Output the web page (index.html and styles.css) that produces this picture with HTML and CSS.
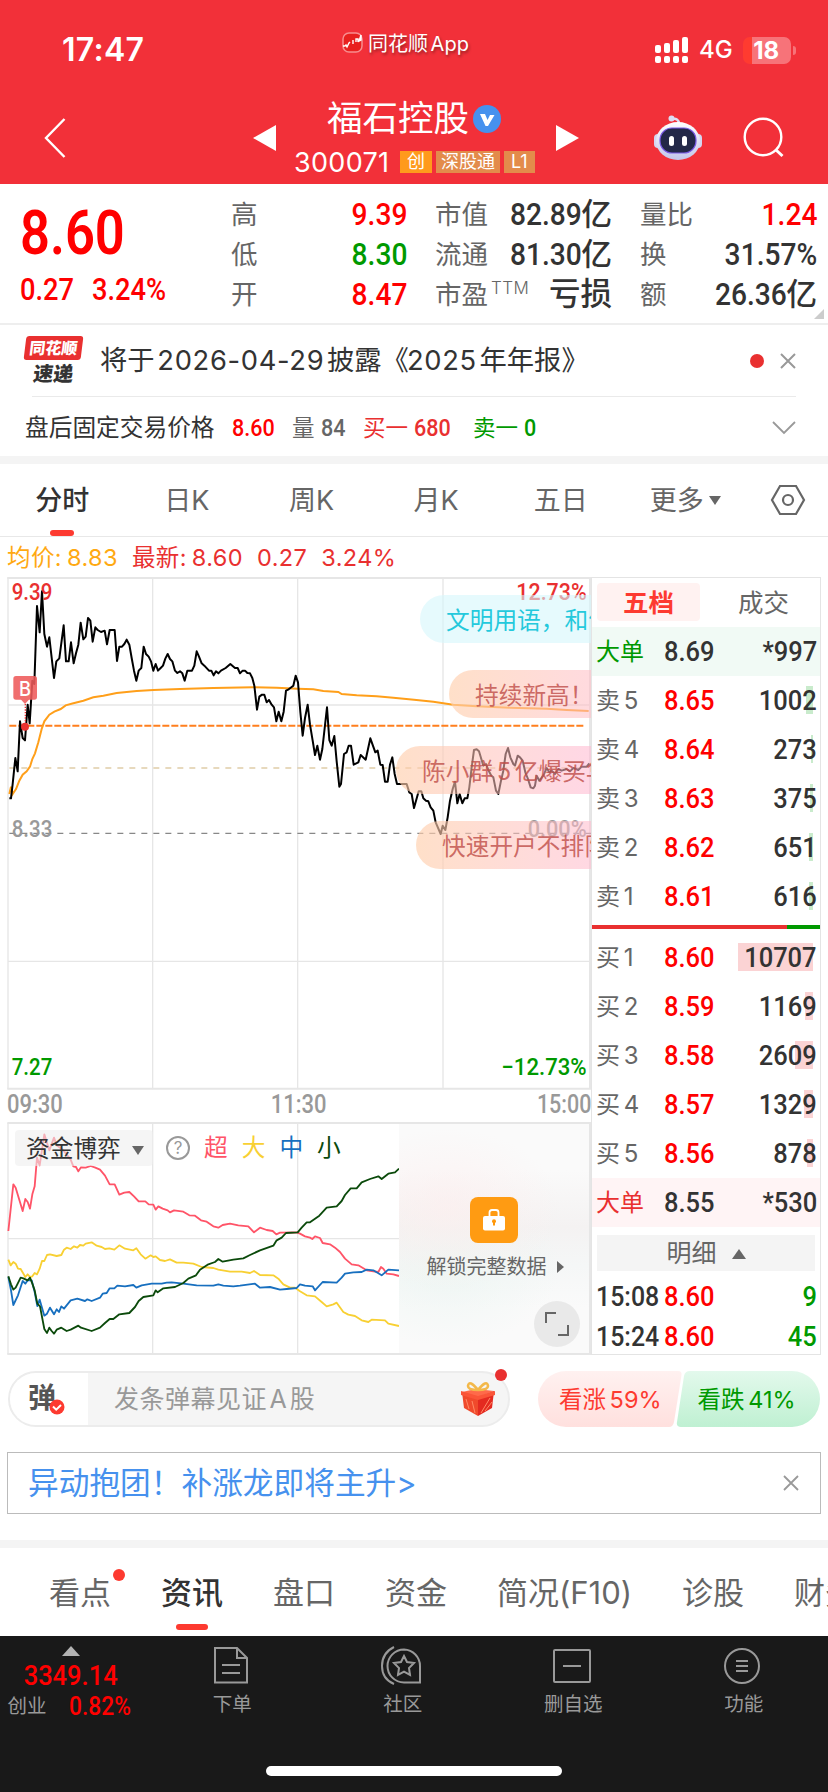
FILE: index.html
```html
<!DOCTYPE html>
<html lang="zh-CN">
<head>
    <meta charset="UTF-8">
    <meta name="viewport" content="width=device-width, initial-scale=1.0">
    <title>福石控股 300071</title>
    <link rel="stylesheet" href="styles.css">
</head>
<body>

    <header class="header">
        <div class="status-bar">
            <span class="time">17:47</span>
            <div class="app-name">
                <svg width="21" height="21" viewBox="0 0 21 21"><rect x="1" y="1" width="19" height="19" rx="6" fill="#e8201f" stroke="#f78d8f" stroke-width="1.5"/><path d="M1 14h2l1-1 1 2 2-4 1-1M11 8v4M14 10V7h2v3M19 3l-2 6 2-1V3" fill="none" stroke="#fff" stroke-width="1.4"/></svg>
                <span>同花顺 App</span>
            </div>
            <div class="signal">
                <svg width="34" height="27" viewBox="0 0 34 27" fill="#fff"><rect x="0" y="8" width="6" height="8" rx="2"/><rect x="9" y="6" width="6" height="10" rx="2"/><rect x="18" y="3" width="6" height="13" rx="2"/><rect x="27" y="0" width="6" height="16" rx="2"/><rect x="0" y="19" width="6" height="7" rx="2"/><rect x="9" y="19" width="6" height="7" rx="2"/><rect x="18" y="19" width="6" height="7" rx="2"/><rect x="27" y="19" width="6" height="7" rx="2"/></svg>
                <span class="net">4G</span>
                <span class="battery">18</span>
                <i class="battery-tip"></i>
            </div>
        </div>

        <div class="nav-bar">
            <svg class="back" width="24" height="42" viewBox="0 0 24 42"><path d="M21.500 2L3 21l18.500 19" fill="none" stroke="#fff" stroke-width="2.400"/></svg>
            <svg width="23" height="26" viewBox="0 0 23 26"><path d="M0 13L23 0v26z" fill="#fff"/></svg>
            <div class="stock">
                <div class="stock-name">福石控股
                    <svg width="28" height="28" viewBox="0 0 28 28"><circle cx="14" cy="14" r="14" fill="#4691ee"/><path d="M7 9h5l2.500 6L17 10h4.500L15 21h-2.500z" fill="#fff"/></svg>
                </div>
                <div class="stock-code"><span class="code">300071</span><span class="tag tag-main">创</span><span class="tag">深股通</span><span class="tag">L1</span></div>
            </div>
            <svg width="23" height="26" viewBox="0 0 23 26"><path d="M23 13L0 0v26z" fill="#fff"/></svg>
            <svg class="robot" width="48" height="46" viewBox="0 0 48 46">
                <defs>
                    <linearGradient id="shell" x1="0" y1="0" x2="0" y2="1"><stop offset="0" stop-color="#fff"/><stop offset="1" stop-color="#c3c5ea"/></linearGradient>
                </defs>
                <path d="M18 4q7-1 7 5" fill="none" stroke="#dfe0f5" stroke-width="2.500"/><circle cx="17.500" cy="3.500" r="3" fill="#dcdcf2"/>
                <rect x="0" y="19" width="8" height="14" rx="4" fill="#d5d6f0"/><rect x="40" y="19" width="8" height="14" rx="4" fill="#d5d6f0"/>
                <ellipse cx="24" cy="26" rx="22" ry="19" fill="url(#shell)"/>
                <rect x="6" y="13" width="36" height="25" rx="12" fill="#232848" stroke="#7a5ae6" stroke-width="1.200"/>
                <rect x="15" y="21" width="5" height="10" rx="2.500" fill="#fff"/><rect x="28" y="21" width="5" height="10" rx="2.500" fill="#fff"/>
            </svg>
            <svg class="search" width="42" height="42" viewBox="0 0 42 42"><circle cx="20" cy="20" r="18.300" fill="none" stroke="#fff" stroke-width="2.400"/><path d="M32.500 32.500l7 6.500" stroke="#fff" stroke-width="3"/></svg>
        </div>
    </header>

    <section class="quote">
        <div class="price-box">
            <div class="price"><span class="num">8.60</span></div>
            <div class="change"><span class="num">0.27</span><span class="num">3.24%</span></div>
        </div>
        <div class="quote-col">
            <div><label>高</label><b class="num red">9.39</b></div>
            <div><label>低</label><b class="num green">8.30</b></div>
            <div><label>开</label><b class="num red">8.47</b></div>
        </div>
        <div class="quote-col">
            <div><label>市值</label><b class="num">82.89<em>亿</em></b></div>
            <div><label>流通</label><b class="num">81.30<em>亿</em></b></div>
            <div><label>市盈<sup>TTM</sup></label><b class="cjk">亏损</b></div>
        </div>
        <div class="quote-col">
            <div><label>量比</label><b class="num red">1.24</b></div>
            <div><label>换</label><b class="num">31.57%</b></div>
            <div><label>额</label><b class="num">26.36<em>亿</em></b></div>
        </div>
        <i class="corner"></i>
    </section>

    <section class="notice">
        <div class="express"><span class="express-top">同花顺</span><span class="express-bottom">速递</span></div>
        <p>将于 <span>2026-04-29</span> 披露《<span>2025</span> 年年报》</p>
        <i class="dot"></i>
        <svg width="18" height="18" viewBox="0 0 18 18"><path d="M2 2l14 14M16 2L2 16" stroke="#999" stroke-width="2"/></svg>
    </section>

    <section class="after-hours">
        <span class="label">盘后固定交易价格</span>
        <span class="num red">8.60</span>
        <span class="gray">量 <span class="num">84</span></span>
        <span class="buy">买一 <span class="num">680</span></span>
        <span class="green">卖一 <span class="num">0</span></span>
        <svg width="24" height="14" viewBox="0 0 24 14"><path d="M1 1l11 11L23 1" fill="none" stroke="#999" stroke-width="1.800"/></svg>
    </section>

    <nav class="chart-tabs">
        <span class="active">分时</span>
        <span>日K</span>
        <span>周K</span>
        <span>月K</span>
        <span>五日</span>
        <span>更多<i class="caret"></i></span>
        <span><svg width="36" height="32" viewBox="0 0 36 32" fill="none" stroke="#666" stroke-width="2.200"><path d="M10 2h16l8 14-8 14H10L2 16z"/><circle cx="18" cy="16" r="5"/></svg></span>
    </nav>

    <div class="legend">
        <span class="avg">均价: 8.83</span>
        <span>最新: 8.60</span>
        <span>0.27</span>
        <span>3.24%</span>
    </div>

    <main class="board">
        <div class="charts">
            <div class="minute-chart">
                <svg width="584" height="513" viewBox="21 339 1752 1539" fill="none">
                    <g stroke="#e6e6e6" stroke-width="4">
                        <path d="M24 340V1876M458 340V1876M893 340V1876M1329 340V1876M24 723H1770M24 1492H1770"/>
                        <path d="M22 342H1773M22 1874H1773M1770 340V1876" stroke-width="6"/>
                    </g>
                    <path d="M28 912H1755" stroke="#e0cda8" stroke-width="5" stroke-dasharray="18 18"/>
                    <path d="M28 1108H1773" stroke="#888" stroke-width="4" stroke-dasharray="18 18"/>
                    <path d="M28 785H1755" stroke="#ff7f1e" stroke-width="6" stroke-dasharray="21 6"/>
                    <polyline stroke="#ff9f1a" stroke-width="6" points="28,990 33,968 38,990 48,975 58,950 68,932 80,922 90,908 97,885 105,868 115,835 125,795 133,772 148,752 163,743 182,735 197,724 220,718 250,710 280,700 310,695 350,687 410,681 460,678 540,675 640,672 760,670 830,671 893,674 940,676 970,681 1015,684 1025,690 1070,694 1130,697 1180,701 1242,707 1300,713 1360,722 1430,727 1530,731 1640,734 1700,738 1766,741"/>
                    <polyline stroke="#000" stroke-width="6" stroke-linejoin="round" points="28,1003 33,1003 38,960 46,882 53,922 60,772 68,822 75,829 83,722 89,778 97,650 103,660 111,426 119,505 126,382 133,510 141,548 148,520 162,642 169,592 178,583 191,484 198,592 206,592 213,535 221,598 228,568 235,542 242,476 250,526 257,518 264,462 271,470 278,533 286,490 293,498 303,504 314,500 321,541 329,498 344,498 351,591 358,548 366,548 373,540 380,527 388,542 395,582 402,620 409,650 416,620 424,612 431,548 438,570 446,578 453,592 460,620 467,600 474,620 482,612 489,605 496,584 503,570 510,585 517,592 525,620 532,627 540,622 547,628 554,650 562,620 576,620 583,605 590,562 597,578 605,598 613,605 627,620 634,620 641,634 648,622 655,628 663,620 677,612 691,600 705,612 713,612 720,628 728,620 735,620 742,627 750,628 757,642 763,665 771,737 778,698 786,692 793,692 800,715 807,708 815,722 822,730 829,772 836,743 844,772 851,743 858,680 866,676 880,665 887,635 894,655 901,744 908,815 915,762 923,722 930,782 938,830 945,873 952,845 960,887 967,855 981,730 988,828 995,845 1003,816 1010,892 1018,968 1023,960 1032,870 1040,865 1046,845 1053,845 1061,902 1075,895 1082,873 1097,887 1111,823 1126,865 1133,860 1141,902 1148,903 1155,953 1163,953 1170,902 1177,880 1184,930 1191,960 1220,960 1228,985 1235,990 1242,1032 1256,982 1264,982 1270,1003 1278,1010 1285,1012 1292,1030 1300,1040 1307,1075 1322,1110 1328,1085 1336,1098 1343,1060 1350,1010 1358,975 1365,953 1372,1018 1379,990 1387,1018 1394,1003 1402,1003 1408,970 1415,910 1422,858 1430,856 1437,862 1450,905 1458,900 1466,920 1474,935 1480,940 1488,980 1495,990 1502,955 1510,920 1517,870 1524,852 1531,880 1540,900 1545,905 1553,875 1560,880 1568,890 1576,925 1584,945 1592,970 1600,973 1605,965 1610,935 1618,950 1630,935 1640,912 1648,925 1655,920 1665,930 1675,915 1685,920 1700,915 1710,922 1720,912 1735,918 1745,908 1760,908 1768,898"/>
                    <path d="M76 712V780" stroke="#e93030" stroke-width="4" stroke-dasharray="4 4"/>
                    <circle cx="75" cy="788" r="12" fill="#e93030"/>
                    <path d="M62 706h26l-13 14z" fill="#f07070"/>
                    <rect x="40" y="636" width="71" height="71" rx="8" fill="#ee5a5a" opacity=".88"/>
                    <text class="marker" x="57" y="696" textLength="36" lengthAdjust="spacingAndGlyphs">B</text>
                    <g class="axis">
                        <text x="35" y="407" fill="#e93030" textLength="122" lengthAdjust="spacingAndGlyphs">9.39</text>
                        <text x="1549" y="407" fill="#e93030" textLength="211" lengthAdjust="spacingAndGlyphs">12.73%</text>
                        <text x="35" y="1118" fill="#999" textLength="122" lengthAdjust="spacingAndGlyphs">8.33</text>
                        <text x="1583" y="1118" fill="#999" textLength="177" lengthAdjust="spacingAndGlyphs">0.00%</text>
                        <text x="35" y="1832" fill="#009900" textLength="122" lengthAdjust="spacingAndGlyphs">7.27</text>
                        <text x="1504" y="1832" fill="#009900" textLength="256" lengthAdjust="spacingAndGlyphs">−12.73%</text>
                    </g>
                </svg>
                <div class="bullet bullet-1">文明用语，和气</div>
                <div class="bullet bullet-2">持续新高！</div>
                <div class="bullet bullet-3">陈小群 5 亿爆买华</div>
                <div class="bullet bullet-4">快速开户不排队</div>
            </div>

            <div class="hours"><span class="num">09:30</span><span class="num">11:30</span><span class="num">15:00</span></div>

            <div class="fund-chart">
                <svg width="584" height="233" viewBox="21 215 1752 699" fill="none">
                    <g stroke="#e6e6e6" stroke-width="4">
                        <path d="M24 218V912M458 218V912M893 218V912M24 565H1197"/>
                        <path d="M22 218H1773M22 911H1773M1770 218V912" stroke-width="6"/>
                    </g>
                    <g stroke-width="5.500" stroke-linejoin="round">
                        <polyline stroke="#ff5468" points="25,542 40,402 47,412 68,482 76,446 83,455 90,475 97,432 104,408 111,322 119,345 133,252 148,300 162,262 170,285 190,300 212,328 220,348 228,350 235,363 243,351 257,352 272,347 286,352 300,358 315,376 329,402 344,402 358,433 373,427 388,425 402,438 416,453 436,453 446,462 460,463 467,478 475,468 488,475 503,480 510,486 522,480 550,484 568,495 585,496 603,510 620,514 640,528 655,532 668,524 690,520 715,525 745,528 762,546 780,532 800,539 818,542 829,552 840,547 890,546 900,550 915,558 930,562 937,566 945,558 960,563 968,578 990,582 1005,592 1020,605 1035,625 1055,642 1075,645 1100,660 1135,665 1143,650 1150,655 1160,670 1180,672 1197,677"/>
                        <polyline stroke="#f8d033" points="25,628 32,645 40,635 47,640 54,655 62,656 76,680 83,672 90,680 97,678 104,668 111,672 119,655 126,632 133,632 141,614 150,612 170,617 184,614 192,598 200,592 212,596 222,588 232,592 240,584 250,586 257,580 275,576 290,586 305,590 315,596 328,594 343,598 358,585 375,595 400,600 409,594 422,612 436,625 452,615 460,620 467,618 480,629 495,632 510,627 530,637 550,637 580,640 605,650 640,653 655,658 690,664 725,664 750,668 762,662 780,674 820,675 835,685 850,702 870,712 885,712 900,723 920,735 945,738 965,755 980,768 1000,762 1010,757 1030,785 1045,793 1065,797 1085,810 1105,815 1115,808 1155,810 1165,820 1197,827"/>
                        <polyline stroke="#176fbf" points="25,680 33,720 40,764 54,735 68,692 76,700 83,690 95,690 104,725 112,767 119,748 133,796 141,790 150,772 162,792 170,777 177,785 184,768 192,775 212,750 232,745 255,752 262,747 275,752 300,742 308,730 320,728 329,714 343,714 352,706 375,708 400,704 409,712 425,705 455,700 485,700 500,697 515,696 550,700 590,705 640,706 655,702 670,706 700,708 720,706 765,700 780,712 810,710 840,718 860,716 890,713 900,702 915,706 938,708 945,720 968,695 1010,697 1025,682 1035,670 1060,666 1085,665 1100,658 1120,660 1145,675 1165,658 1197,660"/>
                        <polyline stroke="#0b4a0b" points="25,678 33,702 40,718 47,712 62,682 70,684 83,690 90,682 97,700 104,720 112,760 120,768 133,836 141,848 148,832 155,842 162,850 170,838 184,832 200,842 212,838 235,826 243,832 275,842 300,832 315,818 329,806 340,806 358,792 388,788 405,770 416,752 430,740 460,735 467,720 473,726 490,714 525,710 550,698 565,685 588,675 600,658 625,642 645,635 655,626 668,634 700,628 730,624 750,614 780,600 820,586 830,570 845,562 858,548 893,546 905,532 920,516 930,516 958,496 980,472 1010,468 1025,452 1035,434 1052,414 1070,414 1085,396 1110,386 1135,378 1145,386 1165,370 1185,366 1197,355"/>
                    </g>
                </svg>
                <div class="fund-head">
                    <span class="fund-select">资金博弈<i class="caret"></i></span>
                    <span class="help">?</span>
                    <span class="super">超</span><span class="large">大</span><span class="middle">中</span><span class="small">小</span>
                </div>
                <div class="unlock">
                    <span class="lock"><svg width="22" height="22" viewBox="0 0 22 22"><path d="M6.500 8V3.500Q6.500 1 9 1h4q2.500 0 2.500 2.500V8" fill="none" stroke="#fff" stroke-width="1.800"/><rect y="7" width="22" height="14.500" rx="2" fill="#fff"/><path d="M11 12v4.500" stroke="#ff980a" stroke-width="2"/><circle cx="11" cy="12.300" r="2" fill="#ff980a"/></svg></span>
                    <span class="unlock-text">解锁完整数据<i></i></span>
                    <span class="expand"><svg width="24" height="24" viewBox="0 0 24 24" fill="none" stroke="#666" stroke-width="2"><path d="M1 11V1h10M23 13v10H13"/></svg></span>
                </div>
            </div>
        </div>

        <aside class="order-book">
            <div class="book-tabs"><span class="active">五档</span><span>成交</span></div>
            <div class="row big-sell"><span class="green">大单</span><b class="num">8.69</b><b class="num vol">*997</b></div>
            <div class="row sell"><span>卖 5</span><b class="num red">8.65</b><i style="width: 7px"></i><b class="num vol">1002</b></div>
            <div class="row sell"><span>卖 4</span><b class="num red">8.64</b><i style="width: 2px"></i><b class="num vol">273</b></div>
            <div class="row sell"><span>卖 3</span><b class="num red">8.63</b><i style="width: 3px"></i><b class="num vol">375</b></div>
            <div class="row sell"><span>卖 2</span><b class="num red">8.62</b><i style="width: 4px"></i><b class="num vol">651</b></div>
            <div class="row sell"><span>卖 1</span><b class="num red">8.61</b><i style="width: 4px"></i><b class="num vol">616</b></div>
            <div class="ratio"><i></i></div>
            <div class="row"><span>买 1</span><b class="num red">8.60</b><i style="width: 75px"></i><b class="num vol">10707</b></div>
            <div class="row"><span>买 2</span><b class="num red">8.59</b><i style="width: 8px"></i><b class="num vol">1169</b></div>
            <div class="row"><span>买 3</span><b class="num red">8.58</b><i style="width: 18px"></i><b class="num vol">2609</b></div>
            <div class="row"><span>买 4</span><b class="num red">8.57</b><i style="width: 9px"></i><b class="num vol">1329</b></div>
            <div class="row"><span>买 5</span><b class="num red">8.56</b><i style="width: 6px"></i><b class="num vol">878</b></div>
            <div class="row big-buy"><span class="buy">大单</span><b class="num">8.55</b><b class="num vol">*530</b></div>
            <div class="detail">明细<i></i></div>
            <div class="row trade"><b class="num">15:08</b><b class="num red">8.60</b><b class="num vol green">9</b></div>
            <div class="row trade"><b class="num">15:24</b><b class="num red">8.60</b><b class="num vol green">45</b></div>
        </aside>
    </main>

    <section class="danmu">
        <div class="danmu-input">
            <span class="danmu-switch">弹<svg width="16" height="16" viewBox="0 0 16 16"><circle cx="8" cy="8" r="7.500" fill="#fd3a30"/><path d="M4 7.500l3.200 3.200L12 6" fill="none" stroke="#fff" stroke-width="2"/></svg></span>
            <span class="placeholder">发条弹幕见证 A 股</span>
            <svg class="gift" width="34" height="36" viewBox="0 0 34 36">
                <path d="M1 11l14-3 18 2-16 6z" fill="#ff6a4a"/>
                <path d="M1 11l16 5v19L3 27z" fill="#f04a2c"/><path d="M33 10l-16 6v19l14-8z" fill="#e42a20"/>
                <path d="M0 10l17 5 17-5v4l-17 5-17-5z" fill="#fa5538"/>
                <path d="M5 18l3 10M11 20l3 12M29 17l-9 15M31 21l-7 9" stroke="#ff8a66" stroke-width="1"/>
                <path d="M17 9Q8-2 7 5q0 4 10 4Q26-2 27 5q0 4-10 4" fill="none" stroke="#f3b84a" stroke-width="2.600"/>
            </svg>
            <i class="dot"></i>
        </div>
        <div class="vote">
            <svg width="282" height="56" viewBox="0 0 282 56">
                <defs>
                    <linearGradient id="up" x1="0" y1="0" x2="0" y2="1"><stop offset="0" stop-color="#fff1f0"/><stop offset="1" stop-color="#ffe0de"/></linearGradient>
                    <linearGradient id="down" x1="0" y1="0" x2="0" y2="1"><stop offset="0" stop-color="#e3f9ec"/><stop offset="1" stop-color="#bff0d2"/></linearGradient>
                </defs>
                <path d="M28 0H140q4 0 3.500 4L136 51q-1 5-5 5H28a28 28 0 0 1 0-56z" fill="url(#up)"/>
                <path d="M152 0H254a28 28 0 0 1 0 56H143q-5 0-4-5l7-46q1-5 6-5z" fill="url(#down)"/>
            </svg>
            <div class="vote-text"><span>看涨 59%</span><span class="green">看跌 41%</span></div>
        </div>
    </section>

    <section class="banner">
        <span>异动抱团！补涨龙即将主升&gt;</span>
        <svg width="18" height="18" viewBox="0 0 18 18"><path d="M2 2l14 14M16 2L2 16" stroke="#999" stroke-width="1.800"/></svg>
    </section>

    <nav class="info-tabs">
        <span>看点<i class="dot"></i></span>
        <span class="active">资讯</span>
        <span>盘口</span>
        <span>资金</span>
        <span>简况(F10)</span>
        <span>诊股</span>
        <span>财务</span>
    </nav>

    <footer class="toolbar">
        <div class="tools">
            <div class="index">
                <i></i>
                <b class="num">3349.14</b>
                <div><span>创业</span><b class="num">0.82%</b></div>
            </div>
            <div class="tool">
                <svg width="36" height="40" viewBox="0 0 36 40"><path d="M3 2h21l10 10v24.500H2V2zM24 2v10h10M9 19h18M9 27h18"/></svg>
                <span>下单</span>
            </div>
            <div class="tool">
                <svg width="42" height="40" viewBox="0 0 42 40"><path d="M14 1Q2 7 2 20t12 18M24 3.500A16.500 16.500 0 0 0 24 36.500h16V20A16.500 16.500 0 0 0 24 3.500zM24 10l3 6 7 1-5 5 1 7-6-3.300-6 3.300 1-7-5-5 7-1z"/></svg>
                <span>社区</span>
            </div>
            <div class="tool">
                <svg width="40" height="40" viewBox="0 0 40 40"><rect x="2" y="4" width="36" height="32" rx="1"/><path d="M11 20h18"/></svg>
                <span>删自选</span>
            </div>
            <div class="tool">
                <svg width="38" height="40" viewBox="0 0 38 40"><circle cx="19" cy="20" r="17"/><path d="M13 15h12M13 20h12M13 25h12"/></svg>
                <span>功能</span>
            </div>
        </div>
        <div class="home-bar"></div>
    </footer>

</body>
</html>
```
FILE: styles.css
```css
* {
    box-sizing: border-box;
}

body {
    margin: 0;
    width: 828px;
    height: 1792px;
    overflow: hidden;
    background: #fff;
    color: #333;
    font-family: Inter, "Noto Sans CJK SC", sans-serif;
    line-height: 1;
    white-space: nowrap;
    word-spacing: -3px;
}

i, em {
    font-style: normal;
}

svg {
    display: block;
    flex: none;
}

.num {
    display: inline-block;
    font-family: Roboto, "Noto Sans CJK SC", sans-serif;
    font-weight: 500;
    transform: scaleX(.88);
    transform-origin: left center;
}

.red {
    color: #ff0000;
}

.green {
    color: #009900;
}

.buy {
    color: #e93030;
}

.dot {
    width: 14px;
    height: 14px;
    border-radius: 50%;
    background: #e93030;
}

.caret {
    display: inline-block;
    border: 6px solid transparent;
    border-top: 9px solid #666;
    border-bottom: 0;
}

/* Header */
.header {
    height: 184px;
    background: #f23039;
    color: #fff;
}

.status-bar {
    display: flex;
    height: 92px;
    padding: 32px 0 0 62px;
}

.time {
    width: 280px;
    padding-top: 2px;
    font-size: 32px;
    font-weight: 600;
    letter-spacing: .3px;
}

.app-name {
    display: flex;
    gap: 5px;
    width: 313px;
    font-size: 20px;
    text-shadow: 1px 2px 3px rgba(0, 0, 0, .4);
}

.app-name span {
    padding-top: 2px;
}

.signal {
    display: flex;
    align-items: center;
    height: 36px;
}

.net {
    margin: 0 10px 0 10px;
    font-size: 24px;
    font-weight: 500;
}

.battery {
    width: 48px;
    height: 27px;
    padding-right: 1px;
    border-radius: 7px;
    background: linear-gradient(90deg, #ff3b30 9px, #f77379 9px);
    font-size: 24px;
    font-weight: 700;
    line-height: 27px;
    text-align: center;
}

.battery-tip {
    width: 3px;
    height: 9px;
    margin-left: 2px;
    border-radius: 0 4px 4px 0;
    background: #f77379;
}

.nav-bar {
    display: grid;
    grid-template-columns: 253px 23px 280px 23px 75px 48px 1fr;
    align-items: center;
    height: 92px;
}

.back {
    margin-left: 43px;
}

.stock {
    padding: 6px 0 0 18px;
}

.stock-name {
    display: flex;
    gap: 4px;
    align-items: center;
    height: 42px;
    margin-left: 33px;
    font-size: 35.500px;
}

.stock-code {
    display: flex;
    align-items: center;
    height: 44px;
    gap: 4px;
    font-size: 27px;
}

.code {
    width: 96px;
    margin-right: 6px;
    letter-spacing: .300px;
}

.tag {
    height: 22px;
    padding: 0 5px;
    background: #e38b4b;
    font-size: 18px;
    line-height: 21px;
}

.tag:last-child {
    padding: 0 7px;
}

.tag-main {
    padding: 0 7px;
    background: #ff9a1c;
}

.robot {
    grid-column: 6;
}

.search {
    margin-left: 41px;
}

/* Quote */
.quote {
    position: relative;
    display: grid;
    grid-template-columns: 180px 175px 176px 176px;
    column-gap: 29px;
    height: 141px;
    padding: 10px 0 0 22px;
    border-bottom: 2px solid #eee;
}

.price-box {
    color: #ff0000;
}

.price {
    height: 75px;
    margin-left: -2px;
    font-size: 61px;
    line-height: 76px;
}

.price .num {
    font-weight: 600;
    transform: scaleX(.86);
}

.change {
    display: flex;
    gap: 11px;
    margin-left: -2px;
    font-size: 31px;
    line-height: 41px;
}

.quote-col > div {
    display: flex;
    justify-content: space-between;
    height: 40px;
    line-height: 40px;
}

.quote-col label {
    color: #666;
    font-size: 26.500px;
}

.quote-col sup {
    margin-left: 3px;
    font-size: 17px;
    font-weight: 300;
    line-height: 0;
    letter-spacing: .5px;
}

.quote-col b {
    margin-right: -1px;
    font-size: 32px;
    transform-origin: right center;
}

.quote-col em {
    display: inline-block;
    margin-left: 3px;
    font-size: 31px;
    transform: scaleX(1.130);
    transform-origin: right center;
}

.quote-col .cjk {
    font-size: 31.500px;
    font-weight: 500;
}

.corner {
    position: absolute;
    right: 4px;
    bottom: 4px;
    border: 5px solid #ccc;
    border-top-color: transparent;
    border-left-color: transparent;
}

/* Notice */
.notice {
    display: flex;
    align-items: center;
    height: 71px;
    padding: 0 31px 0 25px;
}

.express {
    width: 60px;
    margin-right: 15px;
    font-family: "Noto Sans CJK SC", sans-serif;
    font-weight: 900;
    text-align: center;
}

.express span {
    display: block;
    transform: skewX(-7deg);
}

.express-top {
    width: 57px;
    height: 24px;
    border-radius: 3px;
    background: #e93030;
    color: #fff;
    font-size: 16px;
    line-height: 23px;
}

.express-bottom {
    width: 57px;
    font-size: 20px;
    line-height: 25px;
}

.notice p {
    flex: 1;
    margin: 0;
    font-size: 27.300px;
}

.notice p span {
    margin: 0 -2px;
    letter-spacing: .700px;
}

.notice .dot {
    margin-right: 15px;
}

.after-hours {
    display: flex;
    align-items: center;
    height: 60px;
    margin: 0 32px 0 25px;
    padding-top: 4px;
    background: linear-gradient(#eaeaea, #eaeaea) 7px 0 / 100% 1px no-repeat;
    font-size: 22.500px;
    word-spacing: 0;
}

.after-hours .num {
    font-size: 24.500px;
}

.after-hours .label {
    width: 207px;
    font-size: 23.700px;
}

.after-hours > .num {
    width: 60px;
}

.after-hours .gray {
    width: 71px;
    color: #666;
}

.after-hours .buy {
    width: 110px;
}

.after-hours svg {
    margin-left: auto;
}

/* Chart tabs */
.chart-tabs {
    display: grid;
    grid-template-columns: repeat(6, 124.600px) 1fr;
    height: 81px;
    border-top: 8px solid #f4f4f4;
    border-bottom: 1px solid #e8e8e8;
    color: #666;
    font-size: 27px;
}

.chart-tabs span {
    position: relative;
    display: flex;
    justify-content: center;
    align-items: center;
}

.chart-tabs .active {
    color: #333;
    font-weight: 500;
}

.chart-tabs .active::after, .info-tabs .active::after {
    content: "";
    position: absolute;
    left: 50%;
    bottom: 0;
    width: 24px;
    height: 6px;
    margin-left: -12px;
    border-radius: 3px;
    background: #fd3a30;
}

.chart-tabs .caret {
    margin-left: 5px;
}

.legend {
    display: flex;
    gap: 14px;
    align-items: center;
    height: 40px;
    padding: 1px 7px 0;
    color: #e93030;
    font-size: 23.500px;
    letter-spacing: .400px;
    word-spacing: -2px;
}

.legend .avg {
    color: #ffa912;
}

/* Board */
.board {
    display: flex;
    height: 778px;
    padding-left: 7px;
}

.charts {
    width: 584px;
}

.minute-chart {
    position: relative;
    height: 513px;
    overflow: hidden;
}

.axis {
    font-family: Roboto, sans-serif;
    font-size: 71px;
    font-weight: 500;
}

.marker {
    fill: #fff;
    font-family: Inter, sans-serif;
    font-size: 62px;
    font-weight: 500;
}

.bullet {
    position: absolute;
    width: 260px;
    height: 48px;
    padding-left: 26px;
    border-radius: 24px 0 0 24px;
    background: linear-gradient(90deg, rgba(255, 207, 172, .65), rgba(255, 190, 190, .55) 45%, rgba(255, 182, 225, .6));
    color: rgba(190, 75, 70, .8);
    font-size: 23.700px;
    line-height: 51px;
}

.bullet-1 {
    left: 413px;
    top: 18px;
    background: rgba(214, 246, 251, .6);
    color: #24c9dc;
}

.bullet-2 {
    left: 442px;
    top: 93px;
}

.bullet-3 {
    left: 389px;
    top: 169px;
}

.bullet-4 {
    left: 409px;
    top: 244px;
}

.hours {
    display: flex;
    justify-content: space-between;
    align-items: center;
    height: 32px;
    padding-bottom: 3px;
    color: #999;
    font-size: 25px;
}

.hours .num:nth-child(2) {
    transform-origin: center;
}

.hours .num:last-child {
    transform: scaleX(.86);
    transform-origin: right;
}

.fund-chart {
    position: relative;
    height: 233px;
}

.fund-head {
    position: absolute;
    left: 8px;
    top: 8px;
    display: flex;
    align-items: center;
    height: 36px;
    font-size: 23.700px;
}

.fund-select {
    width: 138px;
    height: 36px;
    margin-right: 13px;
    padding-left: 11px;
    border-radius: 4px;
    background: rgba(239, 239, 239, .6);
    line-height: 37px;
}

.fund-select .caret {
    margin: 0 0 2px 11px;
}

.help {
    width: 24px;
    height: 24px;
    margin-right: 14px;
    border: 2px solid #999;
    border-radius: 50%;
    color: #999;
    font-size: 17px;
    line-height: 21px;
    text-align: center;
}

.super, .large, .middle {
    margin-right: 14px;
}

.super {
    color: #ff5468;
}

.large {
    color: #f8d033;
}

.middle {
    color: #176fbf;
}

.small {
    color: #0b4a0b;
}

/* locked part of the fund chart */
.unlock {
    position: absolute;
    left: 392px;
    top: 2px;
    display: flex;
    flex-direction: column;
    align-items: center;
    width: 190px;
    height: 229px;
    padding-top: 73px;
    background: radial-gradient(ellipse 60% 35% at 25% 37%, rgba(253, 238, 238, .7), transparent), radial-gradient(ellipse 60% 35% at 25% 62%, rgba(234, 245, 241, .7), transparent), linear-gradient(#fafafa 20%, #f4f2f2 45%, #f5f7f7 62%, #fafafa 80%);
}

.lock {
    display: flex;
    justify-content: center;
    align-items: center;
    width: 48px;
    height: 46px;
    border-radius: 8px;
    background: #ff9b12;
}

.unlock-text {
    display: flex;
    align-items: center;
    gap: 10px;
    margin-top: 14px;
    padding-left: 2px;
    color: #666;
    font-size: 20px;
}

.unlock-text i {
    border: 6px solid transparent;
    border-left: 7px solid #666;
    border-right: 0;
}

.expand {
    position: absolute;
    right: 9px;
    bottom: 6px;
    display: flex;
    justify-content: center;
    align-items: center;
    width: 46px;
    height: 46px;
    border-radius: 50%;
    background: #e9e9e9;
}

/* Order book */
.order-book {
    width: 230px;
    border: 1px solid #e4e4e4;
}

.book-tabs {
    display: flex;
    gap: 12px;
    height: 49px;
    padding: 5px 5px 6px;
    color: #666;
    font-size: 25.500px;
    line-height: 39px;
    text-align: center;
}

.book-tabs span {
    flex: none;
    width: 103px;
}

.book-tabs .active {
    border-radius: 4px;
    background: #fff2f1;
    color: #fd3a30;
    font-weight: 700;
}

.row {
    position: relative;
    display: flex;
    align-items: center;
    height: 49px;
    padding: 1px 3px 0 4px;
    font-size: 28px;
}

.row span {
    width: 68px;
    color: #666;
    font-size: 24px;
}

.row .green {
    color: #009900;
}

.row .buy {
    color: #e93030;
}

.row .num {
    transform: scaleX(.91);
}

.row .vol {
    position: relative;
    margin-left: auto;
    transform-origin: right center;
}

.row i {
    position: absolute;
    right: 7px;
    top: 10px;
    height: 28px;
    background: #fbd3d4;
}

.sell i {
    background: #c9ebcc;
}

.big-sell {
    background: #f1faf5;
}

.big-buy {
    background: #fff4f5;
}

.ratio {
    height: 4px;
    margin: 4px 0;
    background: #e93030;
}

.ratio i {
    display: block;
    width: 33px;
    height: 4px;
    margin-left: auto;
    background: #009900;
}

.detail {
    display: flex;
    justify-content: center;
    align-items: center;
    gap: 15px;
    height: 36px;
    margin: 8px 5px 5px;
    padding-top: 1px;
    background: #f4f4f4;
    color: #666;
    font-size: 25px;
}

.detail i {
    border: 7px solid transparent;
    border-top: 0;
    border-bottom: 10px solid #666;
}

.trade {
    height: 40px;
}

.trade .num:first-child {
    width: 68px;
    transform: scaleX(.89);
}

/* Bullet comment input and vote */
.danmu {
    display: flex;
    justify-content: space-between;
    height: 97px;
    padding: 16px 8px 0;
}

.danmu-input {
    position: relative;
    display: flex;
    align-items: center;
    width: 502px;
    height: 56px;
    border: 2px solid #ececec;
    border-radius: 28px;
    background: #f5f5f5;
}

.danmu-switch {
    position: relative;
    width: 78px;
    height: 52px;
    padding-left: 18px;
    border-radius: 26px 0 0 26px;
    background: #fff;
    color: #555;
    font-size: 28px;
    font-weight: 700;
    line-height: 50px;
}

.danmu-switch svg {
    position: absolute;
    left: 39px;
    top: 26px;
}

.placeholder {
    flex: 1;
    padding: 1px 0 0 26px;
    color: #999;
    font-size: 25px;
    letter-spacing: .500px;
    word-spacing: -5px;
}

.gift {
    margin-right: 13px;
}

.danmu-input .dot {
    position: absolute;
    right: 1px;
    top: -4px;
    width: 12px;
    height: 12px;
}

.vote {
    position: relative;
    width: 282px;
}

.vote-text {
    position: absolute;
    left: 21px;
    top: 1px;
    display: flex;
    gap: 36px;
    color: #fd3a30;
    font-size: 23.500px;
    line-height: 56px;
}

.banner {
    display: flex;
    justify-content: space-between;
    align-items: center;
    width: 814px;
    height: 62px;
    margin-left: 7px;
    padding: 0 20px;
    border: 1px solid #bbb;
    color: #4691ee;
    font-size: 30.700px;
}

/* Info tabs */
.info-tabs {
    display: flex;
    gap: 50px;
    height: 96px;
    margin-top: 26px;
    padding-left: 49px;
    border-top: 8px solid #f4f4f4;
    color: #666;
    font-size: 31px;
    line-height: 89px;
}

.info-tabs span {
    position: relative;
}

.info-tabs .active {
    color: #333;
    font-weight: 500;
}

.info-tabs .active::after {
    bottom: 6px;
    width: 32px;
    margin-left: -16px;
}

.info-tabs .dot {
    position: absolute;
    right: -14px;
    top: 21px;
    width: 12px;
    height: 12px;
    background: #fd3a30;
}

/* Toolbar */
.toolbar {
    height: 156px;
    padding-top: 10px;
    background: #191919;
    color: #999;
}

.tools {
    display: grid;
    grid-template-columns: 147px repeat(4, 170.500px);
    height: 120px;
    overflow: hidden;
}

.index {
    display: flex;
    flex-direction: column;
    align-items: center;
    width: 141px;
}

.index > i {
    border: 9px solid transparent;
    border-top: 0;
    border-bottom: 10px solid #b3b3b3;
}

.index b {
    margin-top: 6px;
    color: #ff0000;
    font-size: 28px;
    transform: scaleX(.91);
    transform-origin: center;
}

.index div {
    display: flex;
    align-items: center;
    gap: 19px;
    margin-top: 4px;
    font-size: 19.500px;
}

.index div b {
    margin: 0;
    font-size: 25px;
}

.tool {
    display: flex;
    flex-direction: column;
    align-items: center;
    gap: 9px;
    font-size: 19.500px;
}

.tool svg {
    margin-left: -3px;
    fill: none;
    stroke: #999;
    stroke-width: 2;
}

.home-bar {
    width: 296px;
    height: 10px;
    margin: 0 auto;
    border-radius: 5px;
    background: #fff;
}
```
